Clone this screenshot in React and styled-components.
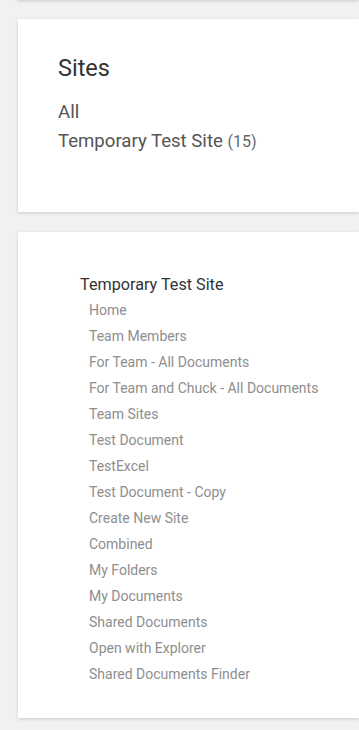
import React from "react";
import styled, { createGlobalStyle } from "styled-components";

const Global = createGlobalStyle`
  html, body { margin: 0; padding: 0; }
  body {
    background: #f1f1f1;
    font-family: Roboto, "Liberation Sans", sans-serif;
    overflow-x: hidden;
  }
`;

const Page = styled.div`
  padding: 0 0 12px 18px;
  display: flex;
  flex-direction: column;
`;

const Card = styled.section`
  background: #fff;
  box-shadow: 0 1px 3px rgba(0, 0, 0, 0.16);
  padding: ${(p) => p.$pad};
  margin-bottom: ${(p) => p.$gap || "21px"};
`;

const PrevCard = styled.div`
  background: #fff;
  height: 40px;
  margin-top: -40px;
  margin-bottom: 19px;
  box-shadow: 0 1px 3px rgba(0, 0, 0, 0.16);
`;

const Title = styled.h2`
  margin: 0 0 16px;
  font-weight: 400;
  font-size: 23.5px;
  line-height: 28px;
  color: #333;
`;

const SiteList = styled.ul`
  list-style: none;
  margin: 0;
  padding: 0;
`;

const SiteItem = styled.li`
  font-size: 18.6px;
  line-height: 28.5px;
  color: #555;
`;

const Count = styled.span`
  font-size: 16px;
  color: #666;
`;

const TreeHead = styled.div`
  font-size: 16.2px;
  line-height: 24px;
  color: #333;
`;

const NavList = styled.ul`
  list-style: none;
  margin: 0;
  padding: 0 0 0 9px;
`;

const NavItem = styled.li`
  font-size: 14px;
  line-height: 26px;
  color: #8e8e8e;
`;

const links = [
  "Home",
  "Team Members",
  "For Team - All Documents",
  "For Team and Chuck - All Documents",
  "Team Sites",
  "Test Document",
  "TestExcel",
  "Test Document - Copy",
  "Create New Site",
  "Combined",
  "My Folders",
  "My Documents",
  "Shared Documents",
  "Open with Explorer",
  "Shared Documents Finder",
];

export default function App() {
  return (
    <>
      <Global />
      <Page>
        <PrevCard />
        <Card $pad="35px 0 56px 40px" $gap="20px">
          <Title>Sites</Title>
          <SiteList>
            <SiteItem>All</SiteItem>
            <SiteItem>
              Temporary Test Site <Count>(15)</Count>
            </SiteItem>
          </SiteList>
        </Card>
        <Card $pad="41px 0 31px 62px">
          <TreeHead>Temporary Test Site</TreeHead>
          <NavList>
            {links.map((l) => (
              <NavItem key={l}>{l}</NavItem>
            ))}
          </NavList>
        </Card>
      </Page>
    </>
  );
}
